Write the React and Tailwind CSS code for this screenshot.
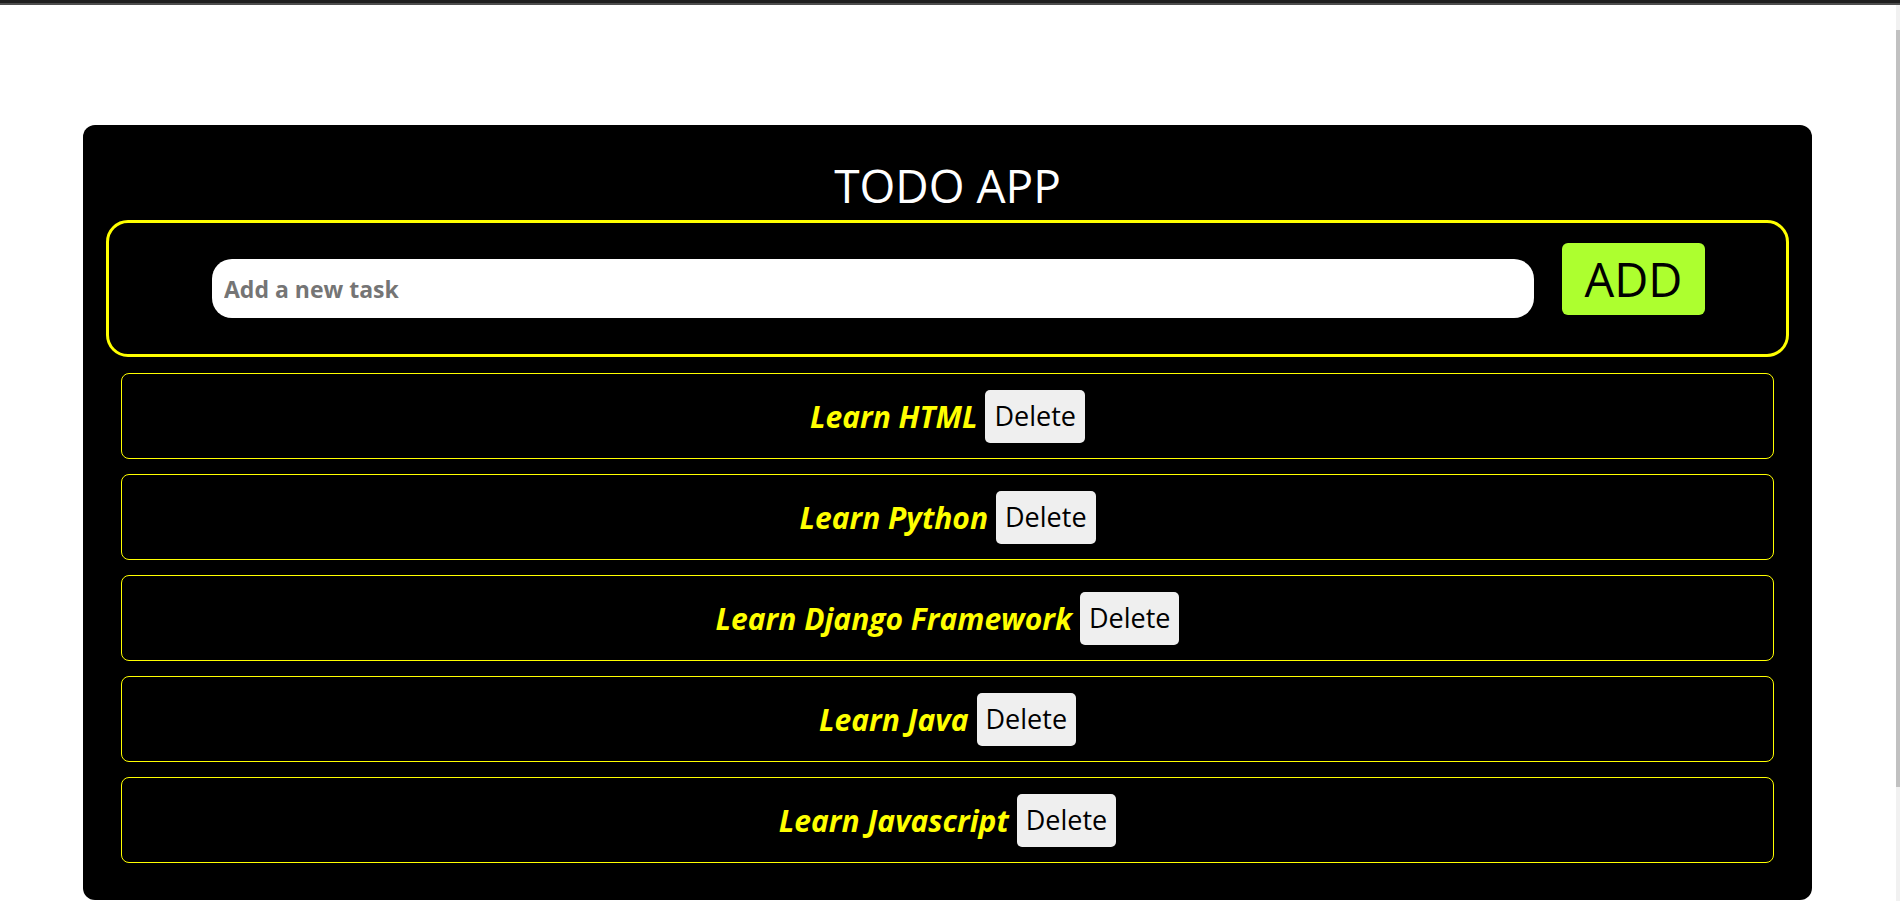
import React, { useState } from "react";

const App = () => {
  const [task, setTask] = useState("");
  const [todos, setTodos] = useState([
    "Learn HTML",
    "Learn Python",
    "Learn Django Framework",
    "Learn Java",
    "Learn Javascript",
  ]);

  const handleAdd = () => {
    if (task.trim()) {
      setTodos([...todos, task.trim()]);
      setTask("");
    }
  };

  const handleDelete = (index) => {
    setTodos(todos.filter((_, i) => i !== index));
  };

  return (
    <div className="h-screen flex flex-col bg-white overflow-hidden font-['Open_Sans',sans-serif]">
      <div className="h-[3px] bg-[#1f1f1f]" />
      <div className="h-[2px] bg-[#4d4d4d]" />

      <div className="flex flex-1">
        <div className="flex-1 pt-[120px]">
          <div className="ml-[83px] w-[1729px] bg-black rounded-[12px] px-[23px] pt-[37px] pb-[37px]">
            <h1 className="text-white text-[46px] leading-[46px] font-normal text-center mb-[12px]">
              TODO APP
            </h1>

            <div className="h-[137px] border-[3px] border-[#ffff00] rounded-[22px] flex items-start pl-[103px] pr-[81px]">
              <input
                value={task}
                onChange={(e) => setTask(e.target.value)}
                placeholder="Add a new task"
                className="flex-1 mt-[36px] h-[59px] rounded-[20px] bg-white px-[12px] text-[23px] font-bold text-black outline-none placeholder:text-[#757575] placeholder:font-bold"
              />
              <button
                onClick={handleAdd}
                className="ml-[28px] mt-[20px] h-[72px] w-[143px] rounded-[6px] bg-[#adff2f] text-[47px] leading-none text-black"
              >
                ADD
              </button>
            </div>

            <div className="mt-[16px] mx-[15px] flex flex-col gap-[15px]">
              {todos.map((todo, index) => (
                <div
                  key={index}
                  className="h-[86px] border border-[#ffff00] rounded-[8px] flex items-center justify-center gap-[8px]"
                >
                  <span className="text-[#ffff00] text-[30px] font-bold italic">{todo}</span>
                  <button
                    onClick={() => handleDelete(index)}
                    className="h-[53px] px-[9px] rounded-[5px] bg-[#efefef] text-[27px] text-black"
                  >
                    Delete
                  </button>
                </div>
              ))}
            </div>
          </div>
        </div>

        <div className="w-[4px] bg-[#f1f1f1] pt-[25px]">
          <div className="h-[757px] bg-[#c1c1c1]" />
        </div>
      </div>
    </div>
  );
};

export default App;
